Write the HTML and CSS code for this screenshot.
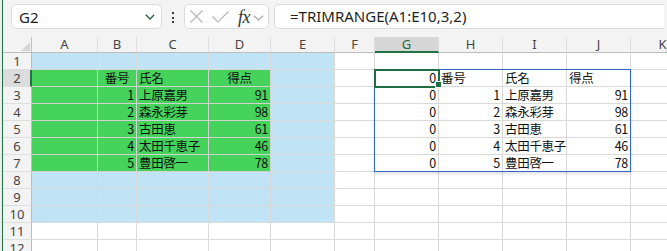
FILE: index.html
```html
<!DOCTYPE html>
<html lang="ja">
<head>
<meta charset="utf-8">
<link rel="stylesheet" href="styles.css">
</head>
<body>
<div class="app">
  <div class="edge"></div>
  <div class="main">
    <div class="toolbar">
      <div class="namebox">
        <span class="name">G2</span>
        <svg class="nb-chev" width="10" height="6" viewBox="0 0 10 6"><polyline points="0.8,0.8 5,5 9.2,0.8" fill="none" stroke="#2b5a43" stroke-width="1.3"/></svg>
      </div>
      <div class="dots"><i></i><i></i><i></i></div>
      <div class="fxbox">
        <svg class="ic-x" width="13" height="13" viewBox="0 0 13 13"><path d="M0.5 0.5 L12.5 12.5 M12.5 0.5 L0.5 12.5" stroke="#b4b4b4" stroke-width="1.1" fill="none"/></svg>
        <svg class="ic-ok" width="17" height="12" viewBox="0 0 17 12"><path d="M0.5 5.5 L6 11 L16.5 0.5" stroke="#b4b4b4" stroke-width="1.1" fill="none"/></svg>
        <span class="fx">fx</span>
        <svg class="ic-chev" width="11" height="6" viewBox="0 0 11 6"><polyline points="0.8,0.8 5.5,5 10.2,0.8" fill="none" stroke="#a8a8a8" stroke-width="1.2"/></svg>
      </div>
      <div class="formula">=TRIMRANGE(A1:E10,3,2)</div>
    </div>
    <div class="sheet">
      <!-- header -->
      <div class="corner"><span class="tri"></span></div>
      <div class="ch">A</div><div class="ch">B</div><div class="ch">C</div><div class="ch">D</div><div class="ch">E</div><div class="ch">F</div><div class="ch sel">G</div><div class="ch">H</div><div class="ch">I</div><div class="ch">J</div><div class="ch">K</div>
      <!-- row 1 -->
      <div class="rh">1</div>
      <div class="c b"></div><div class="c b"></div><div class="c b"></div><div class="c b"></div><div class="c b"></div>
      <div class="c"></div><div class="c"></div><div class="c"></div><div class="c"></div><div class="c"></div><div class="c"></div>
      <!-- row 2 -->
      <div class="rh sel">2</div>
      <div class="c g"></div><div class="c g m">番号</div><div class="c g">氏名</div><div class="c g m">得点</div><div class="c b"></div>
      <div class="c"></div><div class="c r">0</div><div class="c">番号</div><div class="c">氏名</div><div class="c">得点</div><div class="c"></div>
      <!-- row 3 -->
      <div class="rh">3</div>
      <div class="c g"></div><div class="c g r">1</div><div class="c g">上原嘉男</div><div class="c g r">91</div><div class="c b"></div>
      <div class="c"></div><div class="c r">0</div><div class="c r">1</div><div class="c">上原嘉男</div><div class="c r">91</div><div class="c"></div>
      <!-- row 4 -->
      <div class="rh">4</div>
      <div class="c g"></div><div class="c g r">2</div><div class="c g">森永彩芽</div><div class="c g r">98</div><div class="c b"></div>
      <div class="c"></div><div class="c r">0</div><div class="c r">2</div><div class="c">森永彩芽</div><div class="c r">98</div><div class="c"></div>
      <!-- row 5 -->
      <div class="rh">5</div>
      <div class="c g"></div><div class="c g r">3</div><div class="c g">古田恵</div><div class="c g r">61</div><div class="c b"></div>
      <div class="c"></div><div class="c r">0</div><div class="c r">3</div><div class="c">古田恵</div><div class="c r">61</div><div class="c"></div>
      <!-- row 6 -->
      <div class="rh">6</div>
      <div class="c g"></div><div class="c g r">4</div><div class="c g">太田千恵子</div><div class="c g r">46</div><div class="c b"></div>
      <div class="c"></div><div class="c r">0</div><div class="c r">4</div><div class="c">太田千恵子</div><div class="c r">46</div><div class="c"></div>
      <!-- row 7 -->
      <div class="rh">7</div>
      <div class="c g"></div><div class="c g r">5</div><div class="c g">豊田啓一</div><div class="c g r">78</div><div class="c b"></div>
      <div class="c"></div><div class="c r">0</div><div class="c r">5</div><div class="c">豊田啓一</div><div class="c r">78</div><div class="c"></div>
      <!-- row 8 -->
      <div class="rh">8</div>
      <div class="c b"></div><div class="c b"></div><div class="c b"></div><div class="c b"></div><div class="c b"></div>
      <div class="c"></div><div class="c"></div><div class="c"></div><div class="c"></div><div class="c"></div><div class="c"></div>
      <!-- row 9 -->
      <div class="rh">9</div>
      <div class="c b"></div><div class="c b"></div><div class="c b"></div><div class="c b"></div><div class="c b"></div>
      <div class="c"></div><div class="c"></div><div class="c"></div><div class="c"></div><div class="c"></div><div class="c"></div>
      <!-- row 10 -->
      <div class="rh">10</div>
      <div class="c b"></div><div class="c b"></div><div class="c b"></div><div class="c b"></div><div class="c b"></div>
      <div class="c"></div><div class="c"></div><div class="c"></div><div class="c"></div><div class="c"></div><div class="c"></div>
      <!-- row 11 -->
      <div class="rh">11</div>
      <div class="c"></div><div class="c"></div><div class="c"></div><div class="c"></div><div class="c"></div>
      <div class="c"></div><div class="c"></div><div class="c"></div><div class="c"></div><div class="c"></div><div class="c"></div>
      <!-- row 12 -->
      <div class="rh">12</div>
      <div class="c"></div><div class="c"></div><div class="c"></div><div class="c"></div><div class="c"></div>
      <div class="c"></div><div class="c"></div><div class="c"></div><div class="c"></div><div class="c"></div><div class="c"></div>

      <div class="spill"></div>
      <div class="active"></div>
      <div class="handle"></div>
    </div>
  </div>
</div>
</body>
</html>
```

FILE: styles.css
```css
* { box-sizing: border-box; }
html, body { margin: 0; padding: 0; }
body {
  width: 667px;
  height: 251px;
  overflow: hidden;
  background: #f3f3f3;
  font-family: "Noto Sans", "Open Sans", sans-serif;
}
.app { display: flex; height: 251px; }
.edge {
  width: 3px;
  flex: none;
  background: #ececec;
  border-right: 1px solid #1e6e42;
}
.main { flex: 1; min-width: 0; display: flex; flex-direction: column; }

/* toolbar */
.toolbar {
  height: 37px;
  flex: none;
  display: flex;
  align-items: flex-start;
  padding: 4px 0 0 8px;
}
.namebox {
  width: 151px;
  height: 25px;
  background: #fff;
  border: 1px solid #dcdcdc;
  border-radius: 5px;
  display: flex;
  align-items: center;
  padding: 0 6px 0 7px;
}
.name { font-size: 15px; color: #1f1f1f; flex: 1; line-height: 22px; }
.nb-chev { display: block; margin-top: 1px; }
.dots {
  width: 22px;
  height: 25px;
  display: flex;
  flex-direction: column;
  align-items: center;
  padding-top: 8px;
  gap: 2.5px;
}
.dots i { display: block; width: 2px; height: 2px; background: #3a3a3a; }
.fxbox {
  width: 85px;
  height: 25px;
  background: #fff;
  border: 1px solid #dcdcdc;
  border-radius: 5px;
  display: flex;
  align-items: center;
  padding-left: 5px;
}
.ic-x { display: block; flex: none; }
.ic-ok { display: block; flex: none; margin-left: 9px; }
.fx {
  margin-left: 9px;
  font-family: "Liberation Serif", "DejaVu Serif", serif;
  font-style: italic;
  font-size: 18px;
  line-height: 20px;
  color: #333;
  letter-spacing: -0.5px;
}
.ic-chev { display: block; flex: none; margin-left: 3px; margin-top: 2px; }
.formula {
  flex: 1;
  height: 25px;
  margin-left: 5px;
  margin-right: 3px;
  background: #fff;
  border: 1px solid #dcdcdc;
  border-right: none;
  border-radius: 5px 0 0 5px;
  padding-left: 15px;
  font-size: 15px;
  line-height: 23px;
  color: #1f1f1f;
  white-space: nowrap;
}

/* sheet */
.sheet {
  position: relative;
  display: grid;
  grid-template-columns: 29px 66px 39px 72px 62px 64px 40px 64px 64px 64px 64px 64px;
  grid-template-rows: 16px repeat(12, 17px);
  background: #fff;
}
.corner {
  position: relative;
  background: #f3f3f3;
  border-right: 1px solid #bdbdbd;
  border-bottom: 1px solid #bdbdbd;
}
.tri {
  position: absolute;
  right: 1px;
  bottom: 1px;
  width: 0; height: 0;
  border-left: 9px solid transparent;
  border-bottom: 9px solid #d4d4d4;
}
.ch {
  background: #f3f3f3;
  border-right: 1px solid #dedede;
  border-bottom: 1px solid #bdbdbd;
  text-align: center;
  font-size: 13px;
  line-height: 15px;
  color: #454545;
}
.ch.sel {
  background: #d6d6d6;
  border-bottom: 2px solid #217346;
  color: #1d6b40;
}
.rh {
  background: #f3f3f3;
  border-right: 1px solid #bdbdbd;
  border-bottom: 1px solid #dedede;
  text-align: center;
  font-size: 13px;
  line-height: 17px;
  color: #454545;
}
.rh.sel {
  background: #dcdcdc;
  border-right: 2px solid #217346;
  padding-left: 1px;
}
.c {
  border-right: 1px solid #dadada;
  border-bottom: 1px solid #dadada;
  font-family: "Noto Sans CJK JP", "Noto Sans", sans-serif;
  font-size: 12.5px;
  line-height: 16px;
  color: #111;
  padding: 0 2px;
  white-space: nowrap;
  letter-spacing: -0.3px;
}
.c.g { background: #45d35b; border-color: #d2d2d2; }
.c.b { background: #c0e4f5; border-color: #d8d8d8; }
.c.r { text-align: right; }
.c.m { text-align: center; }

/* overlays */
.spill {
  position: absolute;
  left: 371px;
  top: 32px;
  width: 257px;
  height: 103px;
  border: 1px solid #3367c7;
  box-shadow: 0 2px 3px rgba(0,0,0,0.12);
  pointer-events: none;
}
.active {
  position: absolute;
  left: 371px;
  top: 32px;
  width: 66px;
  height: 19px;
  border: 2px solid #1f6e43;
}
.handle {
  position: absolute;
  left: 432px;
  top: 44px;
  width: 7px;
  height: 7px;
  background: #1f6e43;
  border: 1px solid #fff;
}
```
